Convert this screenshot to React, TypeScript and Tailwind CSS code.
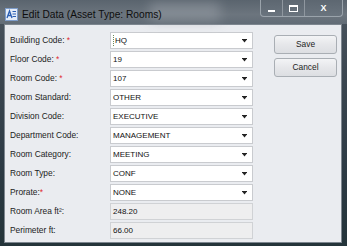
import React from "react";

const rows: { label: string; req?: "space" | "tight"; value: string; ro?: boolean; caret?: boolean }[] = [
  { label: "Building Code:", req: "space", value: "HQ", caret: true },
  { label: "Floor Code:", req: "space", value: "19" },
  { label: "Room Code:", req: "space", value: "107" },
  { label: "Room Standard:", value: "OTHER" },
  { label: "Division Code:", value: "EXECUTIVE" },
  { label: "Department Code:", value: "MANAGEMENT" },
  { label: "Room Category:", value: "MEETING" },
  { label: "Room Type:", value: "CONF" },
  { label: "Prorate:", req: "tight", value: "NONE" },
  { label: "Room Area ft\u00b2:", value: "248.20", ro: true },
  { label: "Perimeter ft:", value: "66.00", ro: true },
];

function Arrow() {
  return (
    <svg width="5" height="4" viewBox="0 0 5 4" className="block mr-[2px]">
      <rect x="0" y="0" width="5" height="1" fill="#222" />
      <path d="M0.5 1 H4.5 L2.5 3.5 Z" fill="#222" />
    </svg>
  );
}

function AppIcon() {
  return (
    <svg width="13" height="13" viewBox="0 0 13 13" className="block">
      <rect x="0.5" y="0.5" width="12" height="12" fill="#e4ecf8" stroke="#7d9cc9" />
      <path d="M2 10 L4.5 3 L7 10 M3 7.5 H6" stroke="#2b5fb3" strokeWidth="1.3" fill="none" />
      <rect x="7.5" y="3" width="3.5" height="1" fill="#2b5fb3" />
      <rect x="7.5" y="5.5" width="3.5" height="1" fill="#2b5fb3" />
      <rect x="7.5" y="8" width="3.5" height="1" fill="#2b5fb3" />
    </svg>
  );
}

export default function App() {
  return (
    <div
      className="w-[347px] h-[246px] overflow-hidden flex flex-col bg-[linear-gradient(180deg,#4c5660_0%,#3b4650_30%,#2c3a44_70%,#24343a_100%)]"
      style={{ fontFamily: '"Liberation Sans", Arial, sans-serif' }}
    >
      {/* Title bar */}
      <div className="h-[24px] flex items-start relative bg-[linear-gradient(180deg,#5a646e_0%,#6c757e_60%,#626c76_100%)]">
        <div className="absolute left-[150px] top-[3px] w-[70px] h-[18px] bg-[#959ca4] opacity-60 blur-[6px]" />
        <div className="pl-[5px] pt-[8px] relative">
          <AppIcon />
        </div>
        <div className="pl-[4px] pt-[8px] text-[10.2px] leading-[13px] text-[#0e0e0e] relative">
          Edit Data (Asset Type: Rooms)
        </div>
        <div className="flex-1" />
        <div className="relative mr-[4px] flex h-[17px] rounded-b-[4px] border border-t-0 border-[#9aa3ab] bg-[linear-gradient(180deg,#5d6771,#6a747e)] overflow-hidden">
          <div className="w-[22px] flex items-center justify-center border-r border-[#8f979f]">
            <div className="w-[7px] h-[2px] bg-white mt-[5px]" />
          </div>
          <div className="w-[22px] flex items-center justify-center border-r border-[#8f979f]">
            <div className="w-[9px] h-[7px] border border-white border-t-2" />
          </div>
          <div className="w-[37px] flex items-center justify-center text-white font-bold text-[9px] leading-none">
            X
          </div>
        </div>
      </div>

      {/* Client area */}
      <div className="ml-[4px] mr-[5px] h-[219px] border border-[#7d868f] bg-[#eaecf0] flex pt-[7px]">
        <div className="flex flex-col gap-[2px] pl-[5px]">
          {rows.map((r) => (
            <div key={r.label} className="flex items-center h-[17px]">
              <div className="w-[100px] text-[8.4px] text-[#1c1c1c] whitespace-nowrap">
                {r.label}
                {r.req === "space" && <span className="text-[#e0282d]"> *</span>}
                {r.req === "tight" && <span className="text-[#e0282d]">*</span>}
              </div>
              <div
                className={`w-[143px] h-[17px] border flex items-center pl-[2px] pr-[3px] text-[8px] text-[#111] ${
                  r.ro ? "bg-[#eeeeef] border-[#d0d2d5]" : "bg-white border-[#c9cbcf]"
                }`}
              >
                {r.caret && <span className="w-px h-[11px] border-l border-dotted border-[#6a8a5a] mr-px" />}
                <span className="flex-1">{r.value}</span>
                {!r.ro && <Arrow />}
              </div>
            </div>
          ))}
        </div>
        <div className="ml-[21px] pt-[3px] flex flex-col gap-[4px]">
          <button className="w-[63px] h-[19px] rounded-[3px] border border-[#a9aeb4] bg-[linear-gradient(180deg,#f3f4f6_0%,#e6e7ea_50%,#dcdee2_100%)] text-[8.4px] text-[#1c1c1c]">
            Save
          </button>
          <button className="w-[63px] h-[19px] rounded-[3px] border border-[#a9aeb4] bg-[linear-gradient(180deg,#f3f4f6_0%,#e6e7ea_50%,#dcdee2_100%)] text-[8.4px] text-[#1c1c1c]">
            Cancel
          </button>
        </div>
      </div>
    </div>
  );
}
